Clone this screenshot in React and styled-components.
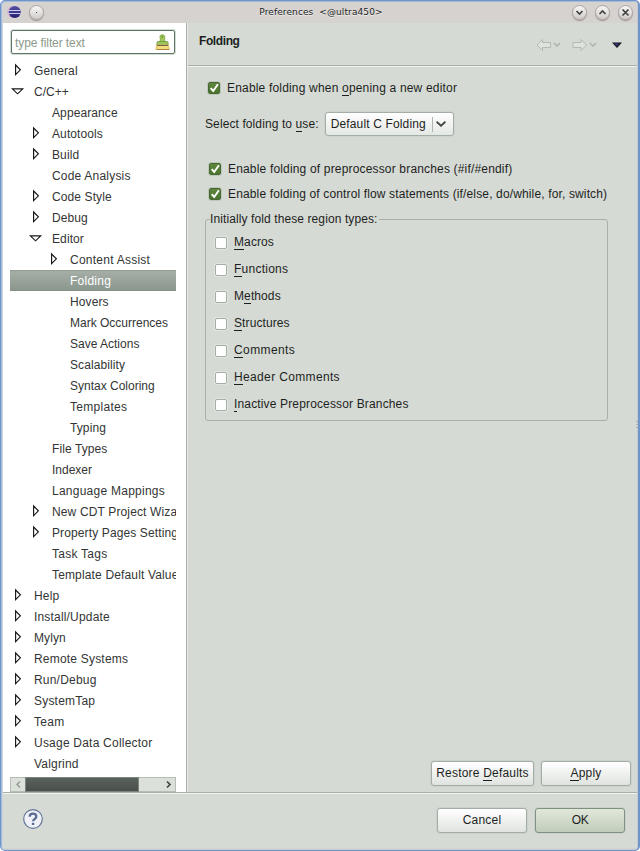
import React from "react";
import styled, { createGlobalStyle } from "styled-components";

const Global = createGlobalStyle`
  * { box-sizing: border-box; }
  html, body { margin: 0; padding: 0; background: #fff; }
  body { font: 12px/15px "Liberation Sans", Arial, sans-serif; color: #1d1f1e; letter-spacing: 0.1px; }
  u { text-decoration: none; box-shadow: 0 1px 0 #1d1f1e; display: inline-block; line-height: 13px; height: 13px; }
`;

const Window = styled.div`
  width: 640px;
  height: 851px;
  border: solid #7095c9;
  border-width: 1px 2px 1px 1px;
  border-radius: 5px 5px 5px 5px;
  box-shadow: inset 1px 1px 0 #a5bbdb, inset 2px 0 0 #ccd3dc, inset -1px -1px 0 #c3cad6;
  background: #d6d2d0;
  padding: 2px 1px 2px 2px;
  display: flex;
  flex-direction: column;
  overflow: hidden;
`;

const TitleBar = styled.header`
  height: 20px;
  flex: none;
  display: flex;
  align-items: center;
  padding: 0 4px 2px 4px;
`;

const Title = styled.h1`
  flex: 1;
  margin: 0;
  padding: 0 0 0 26px;
  text-align: center;
  white-space: pre;
  font: 9px/12px "DejaVu Sans", sans-serif;
  letter-spacing: 0.1px;
  text-shadow: 0 1px 0 #f1efee;
`;

const RoundButton = styled.span`
  width: 15px;
  height: 15px;
  border-radius: 50%;
  margin-left: ${(p) => p.$gap}px;
  background: linear-gradient(#f8f7f6, #cfcbc9);
  border: 1px solid #aaa5a2;
  box-shadow: 0 1px 1px #999491;
  display: grid;
  place-items: center;
`;

const Body = styled.div`
  flex: 1;
  min-height: 0;
  display: flex;
`;

const Sidebar = styled.aside`
  width: 183px;
  background: #fff;
  padding: 7px 10px 0 7px;
  display: flex;
  flex-direction: column;
`;

const Filter = styled.div`
  height: 24px;
  flex: none;
  margin: 0 1px 0 1px;
  width: 164px;
  border: 1px solid #62736a;
  border-radius: 2px;
  box-shadow: 0 0 0 1px #d0ddd2;
  display: flex;
  align-items: center;
  justify-content: space-between;
  padding: 0 4px 0 3px;
  color: #8c9a8c;
  letter-spacing: -0.1px;
`;

const Label = styled.span`
  padding-top: 2px;
`;

const Tree = styled.div`
  margin-top: 6px;
  width: 166px;
  overflow: hidden;
`;

const Row = styled.div`
  height: 21px;
  padding-left: ${(p) => 3 + p.$level * 18}px;
  display: flex;
  align-items: center;
  white-space: nowrap;
  letter-spacing: ${(p) => p.$spacing}px;
  color: ${(p) => (p.$selected ? "#fff" : "#333534")};
  background: ${(p) => (p.$selected ? "linear-gradient(#8c998f, #a5aea6 8%, #8b978e 95%, #818d84)" : "none")};
`;

const Twisty = styled.span`
  width: 21px;
  height: 14px;
  flex: none;
`;

const ScrollBar = styled.div`
  margin-top: 3px;
  height: 15px;
  width: 166px;
  flex: none;
  border: 1px solid #b5bdb5;
  background: #dbe0db;
  display: flex;
  align-items: center;
  justify-content: space-between;
  padding: 0 2px 0 2px;
`;

const Thumb = styled.div`
  width: 114px;
  height: 15px;
  margin: -1px 25px -1px 3px;
  border: 1px solid #7c857e;
  background: linear-gradient(#5a625c, #494f4b);
`;

const Sash = styled.div`
  width: 2px;
  flex: none;
  background: linear-gradient(90deg, #a9b1aa 50%, #e4e9e4 50%);
`;

const Main = styled.main`
  flex: 1;
  min-width: 0;
  background: #d5dad4;
  display: flex;
  flex-direction: column;
  position: relative;
`;

const PageHeader = styled.div`
  height: 44px;
  flex: none;
  border-bottom: 1px solid #eef1ed;
  box-shadow: inset 0 -1px 0 #a7afa7;
  display: flex;
  justify-content: space-between;
  padding: 10px 13px 0 11px;
`;

const PageTitle = styled.h2`
  margin: 0;
  font-size: 12px;
  line-height: 16px;
  letter-spacing: -0.4px;
`;

const Nav = styled.div`
  display: flex;
  height: 24px;
  align-items: center;
`;

const Form = styled.div`
  flex: 1;
  padding: 12px 0 0 17px;
`;

const Field = styled.label`
  display: flex;
  align-items: center;
  height: ${(p) => p.$height || 18}px;
  margin-top: ${(p) => p.$gap || 0}px;
  margin-left: ${(p) => p.$indent || 0}px;
  white-space: nowrap;
  letter-spacing: ${(p) => p.$spacing ?? 0.1}px;
`;

const CheckBox = styled.span`
  width: 12px;
  height: 12px;
  flex: none;
  margin-right: 7px;
  border-radius: 2px;
  border: 1px solid ${(p) => (p.$on ? "#486634" : "#a4aea5")};
  background: ${(p) => (p.$on ? "linear-gradient(#5f883f, #49752c)" : "#fff")};
  box-shadow: 0 0 0 1px ${(p) => (p.$on ? "#bec9bb" : "#dfe4df")};
`;

const Picker = styled.div`
  display: flex;
  align-items: center;
  height: 30px;
  margin-top: 12px;
`;

const Combo = styled.div`
  width: 129px;
  height: 24px;
  margin-left: 6px;
  border: 1px solid #a5aea6;
  border-radius: 3px;
  background: linear-gradient(#fff, #e4e8e4);
  box-shadow: 0 0 0 1px #cdd4cd;
  display: flex;
  align-items: center;
  padding-left: 5px;
  white-space: nowrap;
  letter-spacing: 0.15px;
`;

const ComboArrow = styled.span`
  width: 21px;
  height: 15px;
  margin-left: auto;
  border-left: 1px solid #adb5ad;
  display: flex;
  align-items: center;
  padding-left: 3px;
`;

const Group = styled.fieldset`
  margin: 9px 0 0;
  width: 403px;
  height: 209px;
  padding: 2px 0 0 9px;
  border: 1px solid #a9b1a9;
  border-radius: 3px;
`;

const Legend = styled.legend`
  margin-left: -5px;
  padding: 0 1px 0 0;
  height: 15px;
`;

const Actions = styled.div`
  display: flex;
  justify-content: flex-end;
  gap: 7px;
  padding: 0 6px 6px 0;
`;

const Button = styled.button`
  width: ${(p) => p.$width}px;
  height: 25px;
  padding: 0;
  border: 1px solid ${(p) => (p.$primary ? "#7f8f80" : "#a3ada5")};
  border-radius: 3px;
  background: ${(p) => (p.$primary ? "linear-gradient(#e1e8db, #c1ccb9)" : "linear-gradient(#fff, #dfe3df)")};
  box-shadow: 0 0 0 1px #cbd1cb;
  color: inherit;
  font: inherit;
  letter-spacing: ${(p) => p.$spacing ?? 0.2}px;
`;

const Grip = styled.svg`
  position: absolute;
  right: -1px;
  top: 398px;
`;

const Footer = styled.footer`
  height: 56px;
  flex: none;
  background: #d5dad4;
  border-top: 1px solid #a7afa7;
  box-shadow: inset 0 1px 0 #eef1ed;
  display: flex;
  align-items: center;
  padding: 0 12px 0 20px;
  gap: 8px;
`;

const HelpIcon = styled.svg`
  margin: -3px auto 0 0;
`;

const tree = [
  [0, "r", "General", 0.15], [0, "d", "C/C++", 0], [1, "", "Appearance"], [1, "r", "Autotools"],
  [1, "r", "Build"], [1, "", "Code Analysis", 0.2], [1, "r", "Code Style"], [1, "r", "Debug"],
  [1, "d", "Editor"], [2, "r", "Content Assist", 0.25], [2, "", "Folding", 0.25], [2, "", "Hovers"],
  [2, "", "Mark Occurrences", 0], [2, "", "Save Actions", 0], [2, "", "Scalability"],
  [2, "", "Syntax Coloring", 0], [2, "", "Templates", 0.3], [2, "", "Typing"], [1, "", "File Types"],
  [1, "", "Indexer", 0], [1, "", "Language Mappings", 0.25], [1, "r", "New CDT Project Wizard", 0.14],
  [1, "r", "Property Pages Settings", 0.12], [1, "", "Task Tags", 0.25], [1, "", "Template Default Values", 0.15],
  [0, "r", "Help", 0.2], [0, "r", "Install/Update", 0.18], [0, "r", "Mylyn"], [0, "r", "Remote Systems", 0.2],
  [0, "r", "Run/Debug", 0.2], [0, "r", "SystemTap", 0.2], [0, "r", "Team", 0.3],
  [0, "r", "Usage Data Collector", 0.22], [0, "", "Valgrind", 0.2],
];

const regions = [
  ["", "M", "acros"], ["", "F", "unctions", 0.25], ["M", "e", "thods"], ["", "S", "tructures"],
  ["", "C", "omments", 0.4], ["", "H", "eader Comments", 0.35], ["", "I", "nactive Preprocessor Branches", 0.15],
];

const Expander = ({ kind }) => (
  <Twisty>
    {kind && (
      <svg width="14" height="14" viewBox="0 0 14 14" fill="#fff" stroke="#171918" strokeWidth="1.15" overflow="visible">
        {kind === "r" ? <path d="M2.6 1V10.600L7.4 5.800Z" /> : <path d="M-.6 3.900H9.700L4.600 8.800Z" />}
      </svg>
    )}
  </Twisty>
);

const Check = ({ on }) => (
  <CheckBox $on={on}>
    {on && (
      <svg width="11" height="11" viewBox="0 0 11 11" display="block" fill="none" stroke="#fff" strokeWidth="1.9">
        <path d="M1.7 5.2 4.2 8 8.9 1.2" />
      </svg>
    )}
  </CheckBox>
);

const Chevron = ({ d, size = 9, color = "#424542", width = 1.7 }) => (
  <svg width={size} height={size} viewBox="0 0 9 9" fill="none" stroke={color} strokeWidth={width}>
    <path d={d} />
  </svg>
);

const Eclipse = () => (
  <svg width="14" height="14" viewBox="0 0 14 14">
    <defs>
      <linearGradient id="orb" x2="0" y2="1">
        <stop stopColor="#5a52a4" />
        <stop offset="1" stopColor="#201c6c" />
      </linearGradient>
    </defs>
    <circle cx="6.200" cy="7" r="6" fill="#d3abc9" />
    <circle cx="7.800" cy="7" r="6" fill="url(#orb)" />
    <path d="M.5 5.500H13.500M.3 8.500H13.700" stroke="#c9c8ee" strokeWidth="1" />
  </svg>
);

const Broom = () => (
  <svg width="15" height="17" viewBox="0 0 15 17">
    <path d="M5.300 8V4.500Q4 .8 7.300 .8T9.600 4.500V8Z" fill="#a3c957" stroke="#83ad4b" />
    <circle cx="7.300" cy="3" r=".8" fill="#557c2e" />
    <path d="M2 11V8.500Q2 7.500 3.500 7.500H11.500Q13 7.500 13 8.500V11Z" fill="#9dc65a" stroke="#769c45" />
    <path d="M1.800 11H13.300L14.200 15.500H.8Z" fill="#f2dc7c" stroke="#dcbd63" />
    <path d="M2 11.500H13" stroke="#77654a" />
    <path d="M2 15.500H14" stroke="#ad8341" />
  </svg>
);

const History = () => (
  <svg width="88" height="16" viewBox="0 0 88 16" fill="none">
    <g stroke="#b3bab2" fill="#dfe3de">
      <path d="M1 8 6.500 2.500V5.500H14.500V10.500H6.500V13.500Z" />
      <path d="M50.500 8 45 2.500V5.500H37V10.500H45V13.500Z" />
    </g>
    <path d="M18 6 21 9 24 6M54 6 57 9 60 6" stroke="#acb4ac" strokeWidth="1.500" />
    <path d="M76 5.500H86L81 11Z" fill="#16171c" />
    <path d="M78 6.500H83L81 9Z" fill="#343b88" />
  </svg>
);

export default function App() {
  return (
    <>
      <Global />
      <Window>
        <TitleBar>
          <Eclipse />
          <RoundButton $gap={8}><Chevron d="M4 4.500H5" width={1} /></RoundButton>
          <Title>{"Preferences  <@ultra450>"}</Title>
          <RoundButton $gap={0}><Chevron d="M1.500 3 4.500 6 7.500 3" /></RoundButton>
          <RoundButton $gap={8}><Chevron d="M1.500 6 4.500 3 7.500 6" /></RoundButton>
          <RoundButton $gap={8}><Chevron d="M1.500 1.500 7.500 7.500M7.500 1.500 1.500 7.500" /></RoundButton>
        </TitleBar>
        <Body>
          <Sidebar>
            <Filter><Label>type filter text</Label><Broom /></Filter>
            <Tree>
              {tree.map(([level, kind, name, spacing = 0.1]) => (
                <Row key={name} $level={level} $selected={name === "Folding"} $spacing={spacing}>
                  <Expander kind={kind} /><Label>{name}</Label>
                </Row>
              ))}
            </Tree>
            <ScrollBar>
              <Chevron d="M7 1.500 4 4.500 7 7.500" color="#929992" width={1.400} />
              <Thumb />
              <Chevron d="M3 1.500 6 4.500 3 7.500" />
            </ScrollBar>
          </Sidebar>
          <Sash />
          <Main>
            <PageHeader>
              <PageTitle>Folding</PageTitle>
              <Nav><History /></Nav>
            </PageHeader>
            <Form>
              <Field $indent={3} $spacing={0.18}><Check on /><span>Enable folding when <u>o</u>pening a new editor</span></Field>
              <Picker>
                <span>Select folding to <u>u</u>se:</span>
                <Combo>
                  Default C Folding
                  <ComboArrow><Chevron d="M.5 2.500 4.500 6 8.500 2.500" size={10} /></ComboArrow>
                </Combo>
              </Picker>
              <Field $indent={4} $gap={21} $spacing={0.17}><Check on /><span>Enable folding of preprocessor branches (#if/#endif)</span></Field>
              <Field $indent={4} $gap={7} $spacing={0.14}><Check on /><span>Enable folding of control flow statements (if/else, do/while, for, switch)</span></Field>
              <Group>
                <Legend>Initially fold these region types:</Legend>
                {regions.map(([before, key, after, spacing]) => (
                  <Field key={after} $height={27} $spacing={spacing}><Check /><span>{before}<u>{key}</u>{after}</span></Field>
                ))}
              </Group>
            </Form>
            <Actions>
              <Button $width={103}>Restore <u>D</u>efaults</Button>
              <Button $width={90}><u>A</u>pply</Button>
            </Actions>
            <Grip width="2" height="9" viewBox="0 0 2 9"><path d="M1 0V9" stroke="#8c958c" strokeWidth="1" strokeDasharray="1 2" /></Grip>
          </Main>
        </Body>
        <Footer>
          <HelpIcon width="20" height="20" viewBox="0 0 20 20" fill="none">
            <circle cx="10" cy="10" r="9.300" fill="#eff1f6" stroke="#66779a" strokeWidth="1.200" />
            <path d="M6.700 7.700Q6.700 4.700 10 4.700T13.300 7.500Q13.300 9 11.700 9.900T10.100 12.300" stroke="#5c6e95" strokeWidth="2.300" />
            <path d="M8.900 13.700H11.300V16H8.900Z" fill="#5c6e95" />
          </HelpIcon>
          <Button $width={90}>Cancel</Button>
          <Button $width={90} $primary $spacing={-0.4}>OK</Button>
        </Footer>
      </Window>
    </>
  );
}
